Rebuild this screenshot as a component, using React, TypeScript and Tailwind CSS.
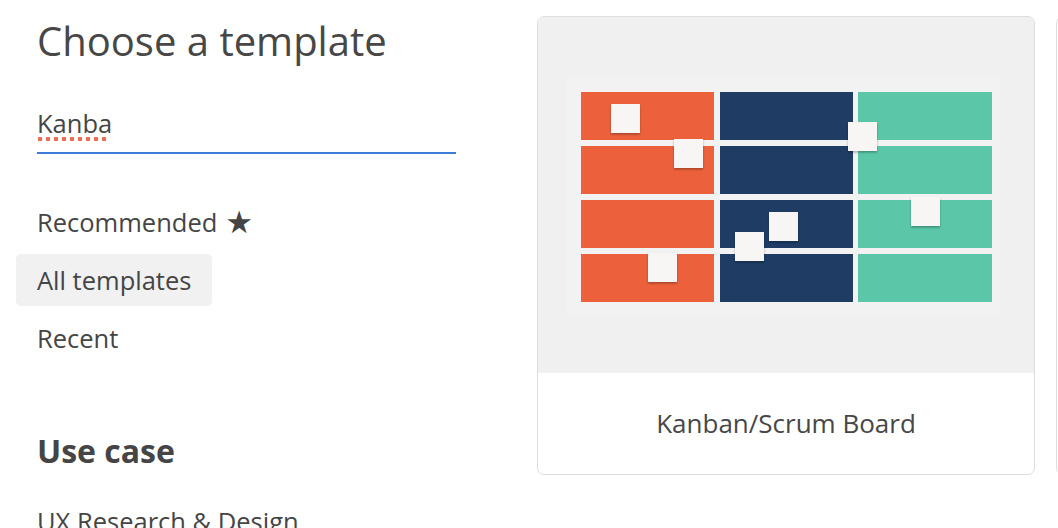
import React from "react";

const stickies: [number, number][] = [
  [44, 28],
  [107, 63],
  [281, 46],
  [344, 121],
  [202, 136],
  [168, 156],
  [81, 177],
];

function KanbanThumb() {
  const cols = [
    { x: 14, w: 133, c: "#ec613b" },
    { x: 153, w: 133, c: "#1e3c64" },
    { x: 291, w: 134, c: "#5bc7a8" },
  ];
  const rows = [16, 70, 124, 178];
  return (
    <svg width="433" height="239" viewBox="0 0 433 239">
      <defs>
        <filter id="sh" x="-20%" y="-20%" width="140%" height="150%">
          <feDropShadow dx="0" dy="1.5" stdDeviation="0.8" floodColor="#000" floodOpacity="0.3" />
        </filter>
      </defs>
      <rect x="0" y="0" width="433" height="239" fill="#f2f2f2" />
      {cols.map((col) =>
        rows.map((y) => (
          <rect key={col.x + "-" + y} x={col.x} y={y} width={col.w} height={48} fill={col.c} />
        ))
      )}
      {stickies.map(([x, y], i) => (
        <rect key={i} x={x} y={y} width={29} height={29} fill="#f7f6f4" filter="url(#sh)" />
      ))}
    </svg>
  );
}

export default function App() {
  return (
    <div className="flex w-[1058px] h-[528px] overflow-hidden bg-white font-['Open_Sans',sans-serif] text-[#454545]">
      <aside className="w-[537px] shrink-0 pl-[37px] flex flex-col">
        <h1 className="mt-[17px] text-[40px] leading-[48px] font-normal text-[#474747]">Choose a template</h1>
        <div className="mt-[42px] w-[419px] border-b-2 border-[#3b7dd8] pb-[13px]">
          <span className="relative inline-block text-[25.5px] leading-[32px]">
            Kanba
            <span className="absolute left-[-1px] bottom-[-3px] h-[6px] w-[72px] bg-[radial-gradient(circle,#ea6f58_2.1px,transparent_2.6px)] bg-[length:8px_6px]" />
          </span>
        </div>
        <nav className="mt-[42px] flex flex-col gap-[6px] text-[25.5px]">
          <div className="h-[52px] flex items-center">
            Recommended
            <span className="ml-[8px] text-[31px] leading-none font-['DejaVu_Sans',sans-serif] text-[#444]">★</span>
          </div>
          <div className="h-[52px] flex items-center -ml-[21px] px-[21px] w-fit rounded-[5px] bg-[#f1f1f1]">All templates</div>
          <div className="h-[52px] flex items-center">Recent</div>
        </nav>
        <h2 className="mt-[67px] text-[32px] font-bold leading-[40px]">Use case</h2>
        <div className="mt-[34px] text-[25.5px] leading-[32px] whitespace-nowrap">UX Research &amp; Design</div>
      </aside>
      <main className="flex gap-[21px] pt-[16px] items-start">
        <div className="w-[498px] shrink-0 h-[459px] rounded-[7px] border-[1.5px] border-[#dedede] overflow-hidden flex flex-col bg-white">
          <div className="h-[356px] bg-[#f0f0f0] flex items-center justify-center pr-[6px]">
            <KanbanThumb />
          </div>
          <div className="flex-1 flex items-center justify-center text-[26px] text-[#474747]">Kanban/Scrum Board</div>
        </div>
        <div className="w-[498px] shrink-0 h-[459px] rounded-[7px] border-[1.5px] border-[#dedede] bg-white" />
      </main>
    </div>
  );
}
